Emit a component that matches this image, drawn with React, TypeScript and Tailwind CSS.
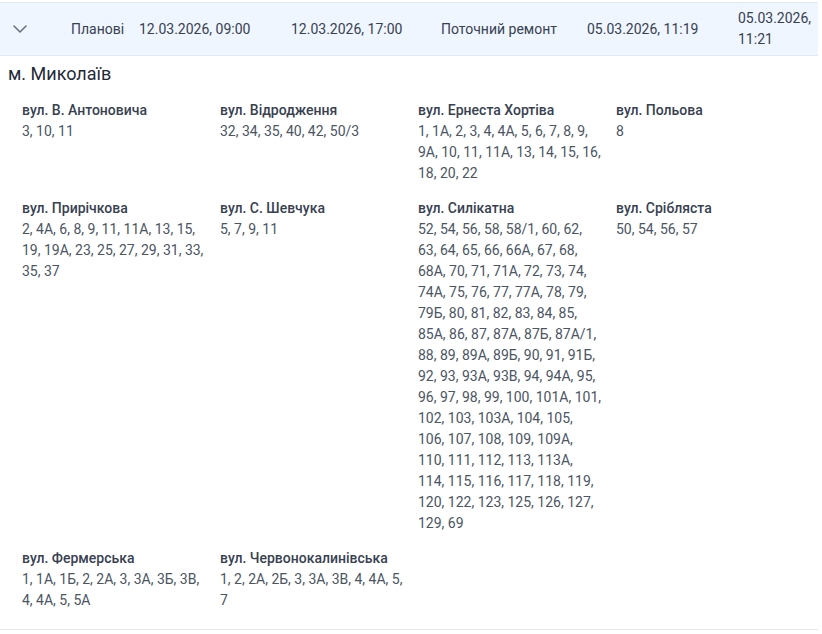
import React from "react";

const streets: { name: string; nums: string }[] = [
  { name: "вул. В. Антоновича", nums: "3, 10, 11" },
  { name: "вул. Відродження", nums: "32, 34, 35, 40, 42, 50/3" },
  { name: "вул. Ернеста Хортіва", nums: "1, 1А, 2, 3, 4, 4А, 5, 6, 7, 8, 9, 9А, 10, 11, 11А, 13, 14, 15, 16, 18, 20, 22" },
  { name: "вул. Польова", nums: "8" },
  { name: "вул. Прирічкова", nums: "2, 4А, 6, 8, 9, 11, 11А, 13, 15, 19, 19А, 23, 25, 27, 29, 31, 33, 35, 37" },
  { name: "вул. С. Шевчука", nums: "5, 7, 9, 11" },
  {
    name: "вул. Силікатна",
    nums: "52, 54, 56, 58, 58/1, 60, 62, 63, 64, 65, 66, 66А, 67, 68, 68А, 70, 71, 71А, 72, 73, 74, 74А, 75, 76, 77, 77А, 78, 79, 79Б, 80, 81, 82, 83, 84, 85, 85А, 86, 87, 87А, 87Б, 87А/1, 88, 89, 89А, 89Б, 90, 91, 91Б, 92, 93, 93А, 93В, 94, 94А, 95, 96, 97, 98, 99, 100, 101А, 101, 102, 103, 103А, 104, 105, 106, 107, 108, 109, 109А, 110, 111, 112, 113, 113А, 114, 115, 116, 117, 118, 119, 120, 122, 123, 125, 126, 127, 129, 69",
  },
  { name: "вул. Срібляста", nums: "50, 54, 56, 57" },
  { name: "вул. Фермерська", nums: "1, 1А, 1Б, 2, 2А, 3, 3А, 3Б, 3В, 4, 4А, 5, 5А" },
  { name: "вул. Червонокалинівська", nums: "1, 2, 2А, 2Б, 3, 3А, 3В, 4, 4А, 5, 7" },
];

export default function App() {
  return (
    <div
      className="w-[822px] h-[634px] bg-white text-[#374151] overflow-hidden"
      style={{ fontFamily: "Roboto, 'Noto Sans', sans-serif" }}
    >
      <div className="pt-[2px] w-[818px]">
        <div className="flex items-center h-[54px] bg-[#eff6ff] border-t border-b border-[#e2e8f0] text-[14px] leading-[21px] text-[#374151]">
          <div className="w-[71px] flex items-center pl-[8px]">
            <svg width="24" height="24" viewBox="0 0 24 24" fill="none" stroke="#6b7280" strokeWidth="1.6" strokeLinecap="round" strokeLinejoin="round">
              <path d="M6 9l6 6 6-6" />
            </svg>
          </div>
          <div className="w-[68px]">Планові</div>
          <div className="w-[152px]">12.03.2026, 09:00</div>
          <div className="w-[150px]">12.03.2026, 17:00</div>
          <div className="w-[146px]">Поточний ремонт</div>
          <div className="w-[151px]">05.03.2026, 11:19</div>
          <div className="w-[72px]">05.03.2026, 11:21</div>
        </div>
      </div>
      <div className="border-b border-[#e2e8f0] w-[818px] pb-[18px]">
        <div className="pl-[8px] pt-[4px] text-[18px] leading-[27px] text-[#1f2937]">м. Миколаїв</div>
        <div className="grid grid-cols-[184px_184px_184px_184px] gap-x-[14px] gap-y-[14px] pl-[22px] pt-[13px]">
          {streets.map((s) => (
            <div key={s.name} className="text-[14px] leading-[21px]">
              <div className="font-medium text-[#374151]">{s.name}</div>
              <div className="text-[#4b5563]">{s.nums}</div>
            </div>
          ))}
        </div>
      </div>
    </div>
  );
}
